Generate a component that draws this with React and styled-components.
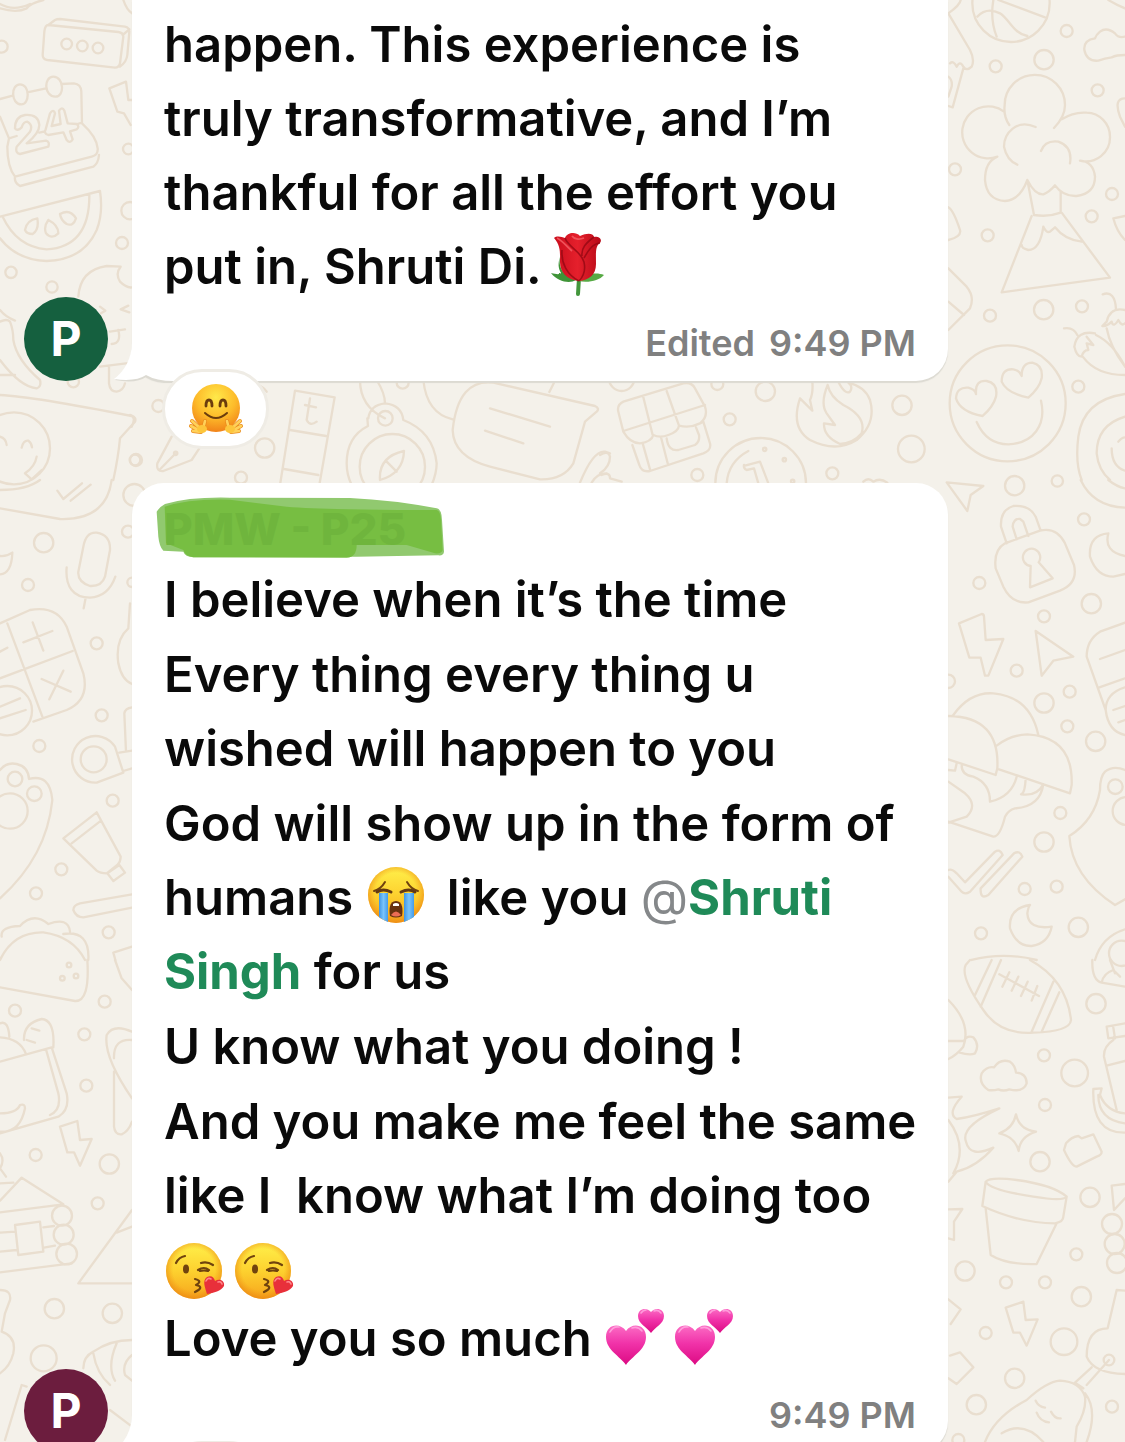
import React from "react";
import styled, { createGlobalStyle } from "styled-components";

const GlobalStyle = createGlobalStyle`
  * { box-sizing: border-box; }
  body {
    margin: 0;
    background: #f4f1ea;
    color: #0a0a0a;
    font-family: Inter, "Liberation Sans", sans-serif;
  }
`;

const Screen = styled.main`
  position: relative;
  height: 100vh;
  overflow: hidden;
`;

const WallpaperSvg = styled.svg`
  position: absolute;
  inset: 0;
  width: 100%;
  height: 100%;
`;

const PaintsSvg = styled.svg`
  position: absolute;
  width: 0;
  height: 0;
`;

const Chat = styled.div`
  position: relative;
  display: flex;
  flex-direction: column;
  gap: 102px;
`;

const MessageRow = styled.article`
  display: flex;
  align-items: flex-end;
  gap: 24px;
  padding-left: 24px;
  padding-right: 177px;
`;

const Avatar = styled.div`
  flex: none;
  display: flex;
  align-items: center;
  justify-content: center;
  width: 84px;
  height: 84px;
  border-radius: 50%;
  background: ${(p) => p.$color};
  color: #fff;
  font-size: 48px;
  font-weight: 700;
  line-height: 84px;
`;

const Bubble = styled.div`
  position: relative;
  flex: 1;
  min-width: 0;
  padding: ${(p) => (p.$continued ? "8px" : "22px")} 32px 16px;
  border-radius: ${(p) => (p.$continued ? "0 0 32px 32px" : "32px")};
  background: #fff;
  box-shadow: 0 2px 1px #dcdad2;
`;

const TailSvg = styled.svg`
  position: absolute;
  left: -18px;
  bottom: -2px;
  width: 60px;
  height: 60px;
`;

const Sender = styled.div`
  position: relative;
  margin-bottom: 10px;
  color: #6fb53d;
  font-size: 44px;
  font-weight: 800;
  line-height: 48px;
  white-space: nowrap;
`;

const SenderName = styled.span`
  position: relative;
`;

const MarkerSvg = styled.svg`
  position: absolute;
  left: -9px;
  top: -10px;
  width: 290px;
  height: 65px;
`;

const MessageText = styled.div`
  display: flex;
  flex-direction: column;
  gap: 1px;
`;

const Paragraph = styled.p`
  margin: 0;
  font-size: 49px;
  font-weight: 560;
  line-height: 74px;
  white-space: nowrap;
`;

const EmojiLine = styled.div`
  display: flex;
  align-items: flex-end;
  height: 67px;
`;

const EmojiSvg = styled.svg`
  width: 60px;
  height: 60px;
  margin: 0 9px 0 ${(p) => (p.$lead ? "8px" : "0")};
  vertical-align: -10px;
  overflow: visible;
`;

const At = styled.span`
  color: #85888a;
  font-weight: 400;
`;

const Mention = styled.a`
  color: #1f8a58;
  font-weight: 700;
  text-decoration: none;
`;

const Meta = styled.footer`
  display: flex;
  justify-content: flex-end;
  gap: 14px;
  margin-top: 17px;
  color: #808080;
  font-size: 36px;
  font-weight: 560;
  line-height: 44px;
`;

const Reaction = styled.button`
  position: absolute;
  left: 30px;
  top: calc(100% - 12px);
  display: flex;
  align-items: center;
  justify-content: center;
  width: 107px;
  height: 80px;
  padding: 0;
  border: 3px solid #efece5;
  border-radius: 40px;
  background: #fff;
`;

const ReactionEmoji = styled(EmojiSvg)`
  width: 54px;
  height: 54px;
  margin: 0;
`;

/* Wallpaper tiles are drawn at three units per pixel. */
const tiles = [
  {
    x: 0, y: 0,
    dots: [[5,140,18],[200,132,16],[247,138,16],[294,144,16],[385,447,16],[390,632,26],[366,729,18],[33,817,17],[156,861,17],[220,1145,17],[405,1380,16],[42,1345,108]],
    d: `M0,12Q40,35 90,12M0,25Q50,40 80,25Q90,10 130,0M370,0Q380,30 396,40
    M145,75Q135,75 133,95L128,165Q128,178 142,180L345,203Q357,203 360,190L370,110Q370,98 355,96L145,75M145,75L165,60Q170,57 180,57L375,80Q388,83 388,95L382,165Q380,185 360,200M368,105L388,88
    M0,297L38,287M82,277L138,265M185,252L222,250Q243,252 244,275L246,370M60,253C90,253 90,313 64,313C32,313 32,253 60,253M160,230C192,230 195,290 166,290C132,290 130,230 160,230
    M0,350L27,415L22,440Q22,500 45,530L275,470Q295,465 293,445Q290,410 246,370M45,530Q42,548 60,558L280,500Q295,490 297,465M27,415L50,408M118,398L135,394M232,372L246,368
    M45,385Q45,350 75,345Q115,342 118,375Q118,400 80,430L138,422Q150,425 145,440L60,462Q45,460 50,440L90,395Q100,375 82,365Q70,365 65,382Q52,395 45,385
    M150,340Q160,325 165,340L155,378L182,372L177,332Q187,318 193,332L203,370L230,372Q240,380 230,388L210,394L218,418Q210,432 200,420L190,397L145,405Q130,400 137,388Z
    M0,650L300,573Q310,640 290,690Q250,780 140,783Q50,780 0,715M8,650Q50,740 140,748Q270,740 268,583M75,690Q80,660 112,655Q118,690 98,702Q80,702 75,690M145,660Q175,675 175,700Q155,720 138,700Q130,680 145,660M180,642Q210,625 228,655Q220,680 200,672Q182,660 180,642
    M235,890Q240,810 320,798L362,800Q345,820 360,845Q380,865 396,862M300,920L316,932L303,940M385,917L362,928L388,937M330,995L375,988M355,990Q365,1030 335,1032M300,1100L396,1088M327,1100L327,1150Q330,1175 350,1175Q370,1172 375,1150
    M0,930Q15,950 45,962M0,965Q20,955 30,965Q40,990 40,1020Q50,1080 120,1140Q125,1160 110,1165Q60,1160 0,1080M0,1125L45,1125
    M0,1185Q100,1190 395,1248Q410,1252 405,1265L360,1315Q355,1370 340,1440M0,1310Q18,1315 20,1335M65,1343Q70,1320 85,1322Q95,1330 96,1342M110,1370Q105,1400 75,1420L95,1438L125,1410
    M328,265L378,245L385,300L396,300M328,265L352,335L372,340L392,375`,
  },
  {
    x: 940, y: 0,
    dots: [[380,93,18],[312,179,29],[167,199,18],[473,271,18],[45,508,18],[516,582,18],[455,649,18],[143,706,18],[150,947,18],[311,929,29],[426,919,18],[415,1160,18],[203,1210,174],[213,10,116]],
    d: `M175,0L315,52M160,0Q150,60 170,110M112,50Q140,20 180,40C210,60 220,100 262,108
    M25,40Q60,15 62,0M25,40L90,150Q105,180 95,200Q80,215 70,200Q60,180 50,200Q40,180 30,190M70,205L38,322L25,318M25,230Q38,240 35,260L25,290
    M555,110Q535,115 525,100Q500,80 480,95Q468,105 465,115Q430,120 433,150Q440,185 475,182Q495,175 515,172Q530,165 555,165M505,0Q530,15 555,25
    M208,375Q190,350 194,315A90,90 0 0 1 375,315Q375,350 342,384M192,335A78,78 0 1 0 172,470M365,358Q400,335 440,338A72,72 0 0 1 510,410A72,72 0 0 1 420,482
    M172,470Q135,485 135,540Q140,600 195,603Q240,600 262,540Q285,585 310,583Q330,575 345,556Q370,590 410,588Q465,580 465,530Q460,485 420,482M287,381C230,355 192,400 192,440Q200,480 232,494M303,453Q315,420 355,425Q398,440 390,490
    M262,540L282,645Q325,652 362,638L362,575M275,648L185,877L510,833L365,638M310,680Q300,750 265,750Q245,745 245,735M310,680Q320,700 330,695L345,682Q375,720 425,725
    M25,622Q40,630 60,690Q65,710 25,720M25,805L80,860Q105,890 90,925L25,990M25,905L72,945M555,295Q520,295 540,350L555,380M555,648L520,655Q530,695 555,720
    M488,883Q525,870 528,928M555,930Q510,920 500,965L487,978Q500,980 515,965Q520,985 535,960Q545,980 555,970M500,985Q510,1040 555,1100M372,985Q400,980 412,1005M465,1000Q410,990 403,1040Q410,1070 425,1070Q430,1050 445,1050L440,1030L460,1035L440,1010M468,1005Q520,1030 555,1100M430,1072Q470,1125 555,1125
    M108,1180Q105,1140 140,1143Q175,1150 168,1190Q160,1220 128,1248Q60,1235 48,1195Q50,1160 85,1163Q105,1168 108,1182M245,1128Q245,1088 277,1088Q310,1095 305,1135Q298,1165 265,1193Q200,1180 185,1145Q185,1105 220,1108Q240,1112 245,1128M110,1266Q140,1333 205,1333C280,1330 320,1275 303,1202
    M555,1182Q430,1200 415,1310Q405,1390 425,1440M555,1250Q470,1275 470,1360Q475,1410 510,1440M535,1325Q545,1312 555,1312M515,1345Q515,1400 555,1412`,
  },
  {
    x: 130, y: 370,
    dots: [[18,270,18],[85,108,18],[404,234,29],[333,323,18],[766,145,22],[818,38,18],[787,290,98],[137,250,5]],
    d: `M495,62L614,82L568,345M495,62L450,345M480,180L588,198M462,297L565,315M540,85L530,150Q540,170 560,155M525,105L558,112
    M715,145Q720,105 765,100Q815,105 820,150Q910,185 920,280Q920,310 905,345M712,145L714,168Q650,200 650,280Q650,315 665,345M750,330Q745,260 822,243Q820,310 750,330M767,272L800,305M690,30Q690,110 765,145M740,30Q765,70 765,100
    M880,30Q890,130 968,148M1090,38L1395,108Q1410,115 1400,125L1365,155L1330,280Q1300,330 1230,328L1080,290Q970,260 968,180Q985,25 1090,38M1080,115L1260,170M1065,182L1180,220M1272,38L1258,66M1350,338Q1390,240 1425,245L1440,250M1385,338Q1400,310 1430,310
    M125,200L82,280Q78,305 100,303L185,270L208,235M88,300L135,252M380,45Q400,50 410,65M0,135Q20,140 5,170`,
  },
  {
    x: 600, y: 340,
    dots: [[65,115,38],[352,132,18],[496,154,29],[389,238,18],[906,196,29],[934,327,40],[292,405,18],[697,400,18],[482,430,136],[494,328,5],[553,359,5],[578,424,5]],
    d: `M70,185L250,130Q275,125 285,145L315,200Q325,230 300,250L310,245L330,310Q335,330 310,340L150,393Q125,398 118,375L97,315M70,185Q50,195 55,215L70,275Q90,310 120,310Q155,305 160,285Q180,295 205,285Q235,275 237,257Q270,265 300,250M70,273L315,195M130,172L158,285M200,153L237,257M128,310L150,388M183,292L203,370M200,295Q205,335 235,330L285,315Q300,305 297,285L288,262
    M380,430Q385,365 445,333M432,375Q430,385 440,390L462,385L475,430M432,378L480,365L505,430
    M637,125Q640,160 630,180L637,212L600,175C580,235 590,275 630,300C680,325 730,325 770,300Q830,250 810,180Q795,140 745,128Q760,140 750,155Q735,165 715,125M683,135Q660,190 680,220L705,255L672,250Q670,290 720,312M683,135Q690,170 730,195Q800,230 785,280Q760,310 720,312
    M0,345Q25,330 30,350Q30,380 0,400M5,405Q30,395 30,415L65,425M790,425Q805,410 820,425Q840,412 862,428`,
  },
  {
    x: 0, y: 480,
    dots: [[131,188,29],[84,315,18],[290,490,18],[305,706,18],[118,798,18],[281,838,39],[45,897,22],[103,941,22],[338,962,18],[184,1168,18],[108,1240,18],[326,1357,18],[384,155,18],[396,307,14],[403,45,33],[22,692,74],[30,993,53]],
    d: `M0,85L180,117C280,120 325,75 335,0M0,30Q80,30 120,0M172,32L190,57L246,10M212,62L272,14M37,218Q35,280 0,283M37,218Q20,230 0,228
    M250,200Q258,155 290,158Q332,165 330,210L315,290Q305,320 270,318Q232,305 235,275ZM200,262C195,320 220,353 270,353Q325,350 346,290M257,353L251,385
    M0,430L90,390Q170,375 200,440L250,580Q270,660 200,690L100,725M0,595L218,513M22,430L127,710M70,487L157,453M98,427L130,512M125,597L212,635M190,572L148,658M0,515L22,503M0,680L60,655M0,715L77,690
    M370,878L290,908A70,70 0 1 1 345,800ZM358,818L396,812M370,873L396,865M378,815L373,700Q375,685 396,682
    M0,870Q20,845 50,852Q85,860 87,897Q150,880 157,960Q140,1130 0,1255M290,997L190,1075L290,1172Q300,1180 320,1180L352,1155Q362,1145 362,1130ZM303,1022L215,1090M322,1180L358,1155L375,1178L340,1203Z
    M396,1243L240,1270Q220,1275 220,1290Q228,1312 250,1312L396,1283M5,1370Q0,1340 60,1338Q100,1295 145,1332Q205,1310 210,1355M0,1440Q40,1355 130,1357Q220,1370 255,1440M190,1362Q270,1350 265,1440M396,1400L340,1418L346,1440M390,370L385,445Q345,480 355,550Q365,600 396,612`,
  },
  {
    x: 940, y: 480,
    dots: [[224,17,29],[352,3,17],[432,118,18],[118,309,18],[454,371,29],[312,409,18],[230,572,18],[312,669,29],[389,635,18],[382,739,18],[467,784,29],[361,999,18],[312,1086,29],[254,1227,18],[350,1220,18],[123,1360,18],[415,1342,29],[25,604,20],[526,920,22],[560,993,42],[545,1420,38]],
    d: `M20,7L130,18L92,45L82,93ZM422,0Q460,80 555,83M505,0Q530,20 555,25
    M195,190L300,152Q350,140 375,190L402,255Q415,310 360,332L265,367Q215,372 190,320L167,265Q160,210 195,190M200,190L183,140Q180,90 220,78Q270,75 287,110L302,152M230,178L218,140Q220,115 240,117L250,125L265,168M272,258L270,322L338,295L296,247A26,26 0 1 0 272,258
    M505,160Q445,165 450,230Q470,290 520,290L555,282M505,160Q490,215 555,228M57,430L125,402Q132,402 132,410L137,480L190,477L145,587L135,587L122,533L88,533ZM287,453L400,530L340,542L305,587Z
    M555,428L480,455Q440,480 440,530L497,690M480,537L555,510M478,622L555,595M555,622Q497,640 497,690Q505,755 555,765M520,690L555,678M535,727L555,720
    M40,705Q90,635 160,640Q270,650 295,765M25,708Q180,710 172,865L167,885L25,838M170,797Q210,765 262,763Q400,770 395,915L390,940L177,868M25,870L45,872L50,850M65,857Q65,885 100,890Q150,910 150,965Q215,950 230,890M257,895Q255,940 243,943Q290,950 310,913Q300,980 225,985Q205,990 195,1010Q180,1070 160,1070L25,1025M25,905L75,940Q115,975 80,1010L25,1028
    M25,1170Q35,1165 50,1180L75,1207L165,1115Q180,1105 188,1125L90,1235Q75,1245 65,1235L25,1190M122,1225L222,1120Q240,1110 247,1130L145,1245Q120,1260 122,1225
    M555,870Q520,855 495,875Q480,890 480,930Q465,1020 388,1068Q395,1190 525,1275L555,1258M270,1275Q205,1285 210,1345Q230,1400 275,1398Q325,1390 335,1340Q265,1350 262,1300Q265,1280 270,1275M95,1440Q190,1415 290,1440M555,1348Q485,1370 465,1440`,
  },
  {
    x: 0, y: 960,
    dots: [[314,125,18],[45,152,18],[253,223,18],[259,377,18],[107,585,18],[328,612,29],[293,730,18],[163,1046,29],[337,1060,29],[131,1195,39],[207,15,7],[187,55,7],[228,48,7],[186,767,30],[191,824,30],[200,882,31]],
    d: `M0,82L225,123Q270,125 262,0M345,0L365,55L396,90M160,262Q165,180 125,177Q70,190 72,240M95,205L118,212M80,240L105,248M0,305L155,262L200,400Q210,450 175,470L0,520M138,268L175,400Q185,450 150,465M0,232Q60,235 78,282M0,190Q25,180 28,230M0,460Q50,460 60,435Q75,430 75,445Q60,520 0,515
    M180,500L232,483L240,540L275,537L240,617L222,577L202,577ZM0,722L65,653L190,733L0,757M0,818L45,815M130,802L162,798M0,875L50,870M132,863L165,857M0,937L215,910M45,795L120,785L130,875L55,885ZM0,670L40,668M0,580Q15,600 0,625L18,650
    M396,750L235,970L396,970M350,818L396,800M0,990Q35,990 30,1020L15,1060L5,1115Q50,1130 40,1180Q30,1220 0,1240M396,415Q310,290 320,225Q340,190 396,215M342,295Q340,235 396,240M342,335L342,500Q345,525 365,523Q385,515 396,485
    M250,1225Q250,1190 280,1175Q330,1140 396,1140M280,1180Q290,1240 330,1275M350,1150Q320,1220 345,1262M396,1185Q365,1210 375,1245L396,1262M15,1440L65,1275L80,1280M330,1350L396,1400`,
  },
  {
    x: 940, y: 960,
    dots: [[468,131,29],[312,286,18],[404,339,40],[315,435,18],[300,605,29],[450,712,29],[409,883,18],[75,933,29],[198,967,18],[315,967,18],[424,1010,29],[137,1119,18],[372,1145,40],[224,1255,29],[109,1334,29],[516,1340,18],[55,1440,18],[516,792,30],[524,852,30],[531,909,30],[507,1200,16]],
    d: `M270,0Q380,60 393,180Q390,215 280,218Q180,225 130,150Q60,50 77,15L90,0M155,0L105,105M183,0L122,140M340,65L275,215M358,97L305,215M178,43L297,108M208,37L187,80M235,50L215,92M263,65L243,108M292,78L275,122M457,0Q455,60 485,68L555,80M485,68Q490,40 520,30L540,50M510,0L525,40
    M25,120Q95,190 70,260Q50,285 25,297M25,243L72,243Q80,225 100,232Q120,255 105,280Q90,287 57,277M145,390Q115,370 125,340Q140,318 162,322Q180,295 210,305Q225,315 228,338Q260,340 260,370Q250,398 208,388Q190,395 175,388Q160,392 145,390
    M500,200L555,190M500,200L505,235L555,228M520,203L525,235M520,240Q490,260 492,290L530,450M500,317L555,303M460,387L485,385L480,405Q500,455 555,460M460,387Q455,520 555,518M475,405Q475,480 555,490
    M25,413L65,410Q20,460 50,477Q100,470 178,445Q60,500 78,545Q90,595 160,563Q110,620 50,635L25,665M25,480Q85,560 40,640M228,463Q238,510 288,515Q240,530 236,573Q225,530 178,520Q220,505 228,463M378,550Q395,530 415,528L425,535L460,523L485,575Q485,585 470,590L410,620Q395,620 372,570Z
    M137,665Q150,650 230,660Q340,675 380,710Q370,725 280,710Q150,690 137,665L127,738Q240,790 345,790Q370,785 370,770L380,710M137,745L152,885Q200,915 290,912L350,790M25,748L67,747L42,785L42,840L25,835M25,1018L62,1048L32,1092M30,1187L60,1177L100,1222L50,1272L25,1255M555,672L515,677L522,750L555,715
    M197,1043L250,1025L257,1080L293,1078L260,1157L240,1118L220,1118ZM555,992L530,990L503,1105Q440,1105 440,1190Q460,1240 555,1242M507,1200L440,1275M455,1222L405,1268L430,1285
    M135,1446Q165,1370 260,1320Q320,1265 360,1262Q420,1265 435,1310Q440,1350 410,1400L405,1446M435,1300Q475,1350 440,1446M287,1322Q295,1340 315,1343M290,1358Q300,1385 327,1387M333,1355Q345,1378 362,1375M185,1420Q250,1380 310,1446`,
  },
];

function Wallpaper() {
  return (
    <WallpaperSvg viewBox="0 0 1125 1442" preserveAspectRatio="xMinYMin slice" aria-hidden="true">
      <g fill="none" stroke="#e9decf" strokeWidth="7" strokeLinecap="round" strokeLinejoin="round">
        {tiles.map((t) => (
          <g key={`${t.x}-${t.y}`} transform={`translate(${t.x} ${t.y}) scale(0.33333)`}>
            <path d={t.d} />
            {t.dots.map(([cx, cy, r]) => (
              <circle key={`${cx}-${cy}`} cx={cx} cy={cy} r={r} />
            ))}
          </g>
        ))}
      </g>
    </WallpaperSvg>
  );
}

function EmojiPaints() {
  return (
    <PaintsSvg aria-hidden="true">
      <defs>
        <linearGradient id="face" x1="0" y1="0" x2="0" y2="1">
          <stop offset="0" stopColor="#fff04a" />
          <stop offset=".5" stopColor="#fdd12f" />
          <stop offset="1" stopColor="#f6a41c" />
        </linearGradient>
        <radialGradient id="rim" cx=".5" cy=".48" r=".52">
          <stop offset=".72" stopColor="#f08a12" stopOpacity="0" />
          <stop offset="1" stopColor="#e87f10" stopOpacity=".6" />
        </radialGradient>
        <radialGradient id="hug" cx=".5" cy=".28" r=".75">
          <stop offset="0" stopColor="#ffe94a" />
          <stop offset=".55" stopColor="#fdbb2a" />
          <stop offset="1" stopColor="#f07d17" />
        </radialGradient>
        <linearGradient id="pink" x1="0" y1="0" x2="0" y2="1">
          <stop offset="0" stopColor="#fb6cc4" />
          <stop offset=".45" stopColor="#f133a9" />
          <stop offset="1" stopColor="#dc0a83" />
        </linearGradient>
        <linearGradient id="tear" x1="0" y1="0" x2="1" y2="0">
          <stop offset="0" stopColor="#3f95e4" />
          <stop offset=".5" stopColor="#79c4fb" />
          <stop offset="1" stopColor="#459be8" />
        </linearGradient>
        <linearGradient id="petal" x1="0" y1="0" x2="1" y2="0">
          <stop offset="0" stopColor="#c90d1c" />
          <stop offset=".5" stopColor="#e5202c" />
          <stop offset="1" stopColor="#b80a18" />
        </linearGradient>
      </defs>
    </PaintsSvg>
  );
}

function Face() {
  return (
    <>
      <circle cx="30" cy="30" r="28" fill="url(#face)" />
      <circle cx="30" cy="30" r="28" fill="url(#rim)" />
    </>
  );
}

function Rose() {
  return (
    <EmojiSvg $lead viewBox="0 0 60 60" role="img" aria-label="rose">
      <path d="M29 44L28 60" stroke="#43963c" strokeWidth="4" strokeLinecap="round" />
      <path d="M10 23C8 33 13 42 26 46C20 50 8 48 1 39C6 40 9 41 11 39C8 34 8 29 10 23Z" fill="#3f9438" />
      <path d="M28 47C38 49 49 47 54 41C49 39 43 39 38 41Z" fill="#57aa45" />
      <path d="M4 4C7 1 12 3 15 4C17-1 25-3 30 2C37-1 43-1 44 3C48 2 53 5 50 9C45 12 46 20 46 30C46 41 39 46 29 47C17 46 10 38 10 28C10 19 11 12 4 4Z" fill="url(#petal)" />
      <path d="M15 4C18 13 31 17 34 28C36 37 33 43 29 47M44 3C36 9 31 14 32 22M12 16C11 29 17 41 29 47M50 9C42 10 38 17 34 24" fill="none" stroke="#8f0712" strokeWidth="1.6" opacity=".75" />
      <path d="M7 4C13 7 16 12 22 17M22 2C24 5 29 6 34 4" fill="none" stroke="#f0525a" strokeWidth="1.8" />
    </EmojiSvg>
  );
}

function Crying() {
  return (
    <EmojiSvg $lead={false} viewBox="0 0 60 60" role="img" aria-label="loudly crying face">
      <Face />
      <path d="M13 28H22V57Q17 55 13 52Z" fill="url(#tear)" />
      <path d="M38 28H48V52Q43 55 38 57Z" fill="url(#tear)" />
      <path d="M8 26Q15 24 19 17M41 17Q45 24 52 26" fill="none" stroke="#70420f" strokeWidth="2" strokeLinecap="round" />
      <path d="M11 27Q17 23 25 27M35 27Q43 23 49 27" fill="none" stroke="#643a12" strokeWidth="3" strokeLinecap="round" />
      <path d="M30 36C37 36 37 45 36 51Q30 54 24 51C23 45 23 36 30 36Z" fill="#68320f" />
      <path d="M27 39Q30 37 33 39V41H27Z" fill="#fff" />
      <path d="M25 50Q30 43 35 50Q30 53 25 50Z" fill="#ec6d55" />
    </EmojiSvg>
  );
}

function Kiss() {
  return (
    <EmojiSvg viewBox="0 0 60 60" role="img" aria-label="face blowing a kiss">
      <Face />
      <ellipse cx="22" cy="28" rx="3" ry="4.6" fill="#70430e" />
      <path d="M12 22Q15 16 21 15M37 22Q43 20 49 24M34 29Q40 25 45 29M36 30Q40 29 44 30" fill="none" stroke="#70430e" strokeWidth="2.2" strokeLinecap="round" />
      <path d="M31 38Q39 40 32 44Q41 46 31 51" fill="none" stroke="#70430e" strokeWidth="2.2" strokeLinecap="round" strokeLinejoin="round" />
      <path d="M43 53C41 46 38 40 43 36C47 34 50 36 51 40C56 37 61 40 60 45C57 50 50 52 43 53Z" fill="#e8303a" />
      <path d="M42 40Q44 36 47 38M54 41Q57 40 58 43" fill="none" stroke="#ff858b" strokeWidth="1.6" strokeLinecap="round" />
    </EmojiSvg>
  );
}

function Hearts() {
  return (
    <EmojiSvg viewBox="0 0 60 60" role="img" aria-label="two hearts">
      <path d="M22 59C16 50 2 44 2 31C2 18 16 16 22 25C28 16 42 18 42 31C42 44 28 50 22 59Z" fill="url(#pink)" />
      <path d="M47 27C43 21 34 18 34 10C34 2 43 1 47 6C51 1 60 2 60 10C60 18 51 21 47 27Z" fill="url(#pink)" />
      <path d="M6 26Q9 20 15 21M28 22Q34 20 38 25M37 7Q39 4 42 4M50 5Q54 3 57 7" fill="none" stroke="#ff9cdb" strokeWidth="1.6" strokeLinecap="round" />
    </EmojiSvg>
  );
}

function Hugging() {
  return (
    <ReactionEmoji viewBox="0 0 54 54" role="img" aria-label="hugging face">
      <circle cx="27" cy="26" r="24" fill="url(#hug)" />
      <path d="M17 24C17 16 23 16 23 24M31 24C31 16 37 16 37 24" fill="none" stroke="#6b3d0d" strokeWidth="2.8" strokeLinecap="round" />
      <path d="M16 31Q27 41 38 31" fill="none" stroke="#6b3d0d" strokeWidth="2" strokeLinecap="round" />
      <g fill="none" stroke="#e98a1c" strokeWidth="4" strokeLinecap="round">
        <path d="M12 47L3 39M11 49L2 44M12 50L4 49M14 47L16 39M42 47L51 39M43 49L52 44M42 50L50 49M40 47L38 39" />
      </g>
      <g fill="none" stroke="#ffd15a" strokeWidth="2.6" strokeLinecap="round">
        <path d="M12 47L3 39M11 49L2 44M12 50L4 49M14 47L16 39M42 47L51 39M43 49L52 44M42 50L50 49M40 47L38 39" />
      </g>
      <ellipse cx="13" cy="47" rx="5" ry="4" fill="#fdc63c" />
      <ellipse cx="41" cy="47" rx="5" ry="4" fill="#fdc63c" />
    </ReactionEmoji>
  );
}

function Tail() {
  return (
    <TailSvg viewBox="0 0 60 60" aria-hidden="true">
      <path d="M18 10V22Q17 45 1 57Q22 61 32 54Q42 60 60 60V10Z" fill="#dcdad2" />
      <path d="M18 8V20Q17 43 0 56Q22 59 32 52Q42 58 60 58V8Z" fill="#fff" />
    </TailSvg>
  );
}

function Marker() {
  return (
    <MarkerSvg viewBox="75 375 870 195" preserveAspectRatio="none" aria-hidden="true">
      <path d="M80 425Q90 410 105 402Q180 380 300 383L660 384Q790 390 920 415Q935 418 936 450L942 545Q940 558 925 556L680 560L190 562Q165 560 160 545L100 542Q88 530 85 500Z" fill="#91c96f" />
      <path d="M104 410Q180 385 300 389L470 410Q600 420 920 420Q932 424 933 450L938 540Q935 552 915 550L830 525H680Q680 562 650 563L190 562Q165 558 160 540L108 520Z" fill="#77be42" />
    </MarkerSvg>
  );
}

export default function App() {
  return (
    <Screen>
      <GlobalStyle />
      <Wallpaper />
      <EmojiPaints />
      <Chat>
        <MessageRow>
          <Avatar $color="#15603f">P</Avatar>
          <Bubble $continued>
            <Tail />
            <Paragraph>
              happen. This experience is
              <br />
              truly transformative, and I’m
              <br />
              thankful for all the effort you
              <br />
              put in, Shruti Di.
              <Rose />
            </Paragraph>
            <Meta>
              <span>Edited</span>
              <time>9:49 PM</time>
            </Meta>
            <Reaction type="button" aria-label="Hugging face reaction">
              <Hugging />
            </Reaction>
          </Bubble>
        </MessageRow>

        <MessageRow>
          <Avatar $color="#6c1d3e">P</Avatar>
          <Bubble>
            <Tail />
            <Sender>
              <Marker />
              <SenderName>PMW - P25</SenderName>
            </Sender>
            <MessageText>
              <Paragraph>I believe when it’s the time</Paragraph>
              <Paragraph>
                Every thing every thing u
                <br />
                wished will happen to you
              </Paragraph>
              <Paragraph>
                God will show up in the form of
                <br />
                humans <Crying /> like you <At>@</At>
                <Mention href="#shruti-singh">
                  Shruti
                  <br />
                  Singh
                </Mention>{" "}
                for us
              </Paragraph>
              <Paragraph>U know what you doing !</Paragraph>
              <Paragraph>
                And you make me feel the same
                <br />
                like I&nbsp; know what I’m doing too
              </Paragraph>
              <EmojiLine>
                <Kiss />
                <Kiss />
              </EmojiLine>
              <Paragraph>
                Love you so much <Hearts />
                <Hearts />
              </Paragraph>
            </MessageText>
            <Meta>
              <time>9:49 PM</time>
            </Meta>
            <Reaction type="button" aria-label="Reaction" />
          </Bubble>
        </MessageRow>
      </Chat>
    </Screen>
  );
}
